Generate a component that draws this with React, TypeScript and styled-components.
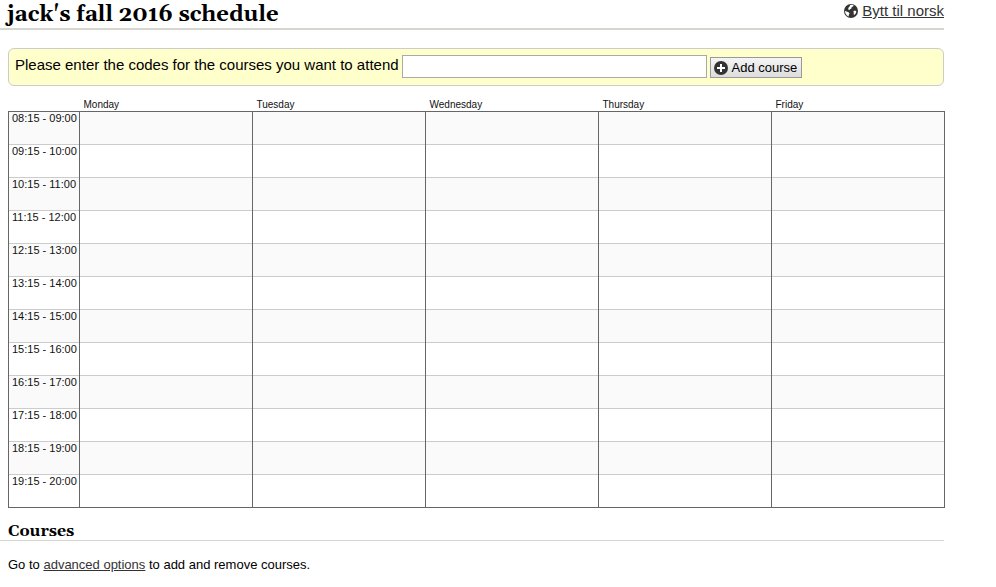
import React, { useState } from "react";
import styled, { createGlobalStyle } from "styled-components";

const sans = `"Liberation Sans", Arial, Helvetica, sans-serif`;
const serif = `Georgia, Gelasio, "DejaVu Serif", serif`;
const ink = "#333";
const rule = "#d6d6ce";
const gridLine = "#666";

const GlobalStyle = createGlobalStyle`
  *, *::before, *::after { box-sizing: border-box; }
  body {
    margin: 0;
    background: #fff;
    color: #000;
    font: 13px/16px ${sans};
  }
`;

const Page = styled.div`
  padding-right: 52px;
`;

const Header = styled.header`
  display: flex;
  justify-content: space-between;
  align-items: flex-start;
  height: 30px;
  padding-left: 7px;
  border-bottom: 2px solid ${rule};
`;

const Title = styled.h1`
  margin: 0;
  font: bold 22px/30px ${serif};
`;

const Language = styled.div`
  display: flex;
  align-items: center;
  gap: 4px;
  padding-top: 2px;
  font-size: 15px;
  line-height: 18px;
`;

const Link = styled.a`
  color: ${ink};
  text-decoration: underline;
`;

const Content = styled.main`
  padding-left: 8px;
`;

const CourseForm = styled.form`
  display: flex;
  align-items: flex-start;
  gap: 3px;
  min-height: 38px;
  margin-top: 18px;
  padding: 6px;
  background: #ffc;
  border: 1px solid #ccc;
  border-radius: 6px;
`;

const FormLabel = styled.label`
  font-size: 15px;
  line-height: 20px;
`;

const CodeInput = styled.input`
  flex: 0 1 305px;
  min-width: 0;
  height: 23px;
  padding: 1px 4px;
  border: 1px solid #a9a9a9;
  background: #fff;
  font: 14px ${sans};
`;

const AddButton = styled.button`
  display: flex;
  align-items: center;
  gap: 4px;
  height: 21px;
  margin-top: 2px;
  padding: 0 4px 0 3px;
  border: 1px solid #999;
  border-radius: 0;
  background: linear-gradient(#f5f5f5, #ddd);
  color: #000;
  font: 13px/19px ${sans};
  white-space: nowrap;
`;

const Icon = styled.svg`
  display: block;
  flex: none;
  width: 14px;
  height: 14px;
  fill: ${ink};
`;

const Schedule = styled.table`
  width: calc(100% + 1px);
  margin-top: 12px;
  border-collapse: collapse;
  table-layout: fixed;
  color: #111;
`;

const TimeColumn = styled.col`
  width: 71px;
`;

const DayHeading = styled.th`
  height: 13px;
  padding: 1px 4px 0;
  font-size: 10px;
  font-weight: normal;
  line-height: 12px;
  text-align: left;
`;

const Body = styled.tbody`
  border: 1px solid ${gridLine};
`;

const HourRow = styled.tr`
  height: 33px;
  border-top: 1px solid #ccc;

  &:first-child {
    border-top-color: ${gridLine};
  }

  &:nth-child(odd) {
    background: #fafafa;
  }
`;

const HourHeading = styled.th`
  padding: 0 3px;
  border-left: 1px solid ${gridLine};
  font-size: 11px;
  font-weight: normal;
  line-height: 12px;
  text-align: left;
  vertical-align: top;
  white-space: nowrap;
`;

const Slot = styled.td`
  padding: 0;
  border-left: 1px solid ${gridLine};
  border-right: 1px solid ${gridLine};
`;

const SectionTitle = styled.h2`
  margin: 14px 0 0;
  padding-left: 8px;
  border-bottom: 1px solid ${rule};
  font: bold 16px/18px ${serif};
`;

const Note = styled.p`
  margin: 16px 0 0;
  padding-left: 8px;
`;

const GlobeIcon = () => (
  <Icon viewBox="0 0 14 14" aria-hidden="true">
    <circle cx="7" cy="7" r="7" />
    <path
      fill="#fff"
      d="M6.200 1 8 .8 9.800 1.400 9 2.600 7.800 3 7.400 4.400 6 5.200 5.200 6.200 4.200 5.200 4.400 3.800 5.600 2.600zM1 6.800 2.600 7.400 4.600 8.200 5.600 9.400 4.800 10.800 4.700 12.600 2.600 11.200 1.300 9zM9.400 7 11 6.400 12.400 7.400 11.800 9.200 10.600 10.800 9.600 10.400 9.800 8.800z"
    />
  </Icon>
);

const PlusIcon = () => (
  <Icon viewBox="0 0 14 14" aria-hidden="true">
    <circle cx="7" cy="7" r="7" />
    <path fill="#fff" d="M6 3h2v3h3v2H8v3H6V8H3V6h3z" />
  </Icon>
);

const days = ["Monday", "Tuesday", "Wednesday", "Thursday", "Friday"];
const hours = Array.from({ length: 12 }, (_, i) => {
  const pad = (n: number) => String(n).padStart(2, "0");
  return `${pad(i + 8)}:15 - ${pad(i + 9)}:00`;
});

export default function App() {
  const [code, setCode] = useState("");

  return (
    <>
      <GlobalStyle />
      <Page>
        <Header>
          <Title>jack's fall 2016 schedule</Title>
          <Language>
            <GlobeIcon />
            <Link href="#norsk">Bytt til norsk</Link>
          </Language>
        </Header>
        <Content>
          <CourseForm onSubmit={(e) => e.preventDefault()}>
            <FormLabel htmlFor="course-code">
              Please enter the codes for the courses you want to attend
            </FormLabel>
            <CodeInput
              id="course-code"
              type="text"
              value={code}
              onChange={(e) => setCode(e.target.value)}
            />
            <AddButton type="submit">
              <PlusIcon />
              Add course
            </AddButton>
          </CourseForm>
          <Schedule>
            <colgroup>
              <TimeColumn />
              {days.map((day) => (
                <col key={day} />
              ))}
            </colgroup>
            <thead>
              <tr>
                <td />
                {days.map((day) => (
                  <DayHeading key={day} scope="col">
                    {day}
                  </DayHeading>
                ))}
              </tr>
            </thead>
            <Body>
              {hours.map((hour) => (
                <HourRow key={hour}>
                  <HourHeading scope="row">{hour}</HourHeading>
                  {days.map((day) => (
                    <Slot key={day} />
                  ))}
                </HourRow>
              ))}
            </Body>
          </Schedule>
        </Content>
        <SectionTitle>Courses</SectionTitle>
        <Note>
          Go to <Link href="#advanced">advanced options</Link> to add and remove
          courses.
        </Note>
      </Page>
    </>
  );
}
